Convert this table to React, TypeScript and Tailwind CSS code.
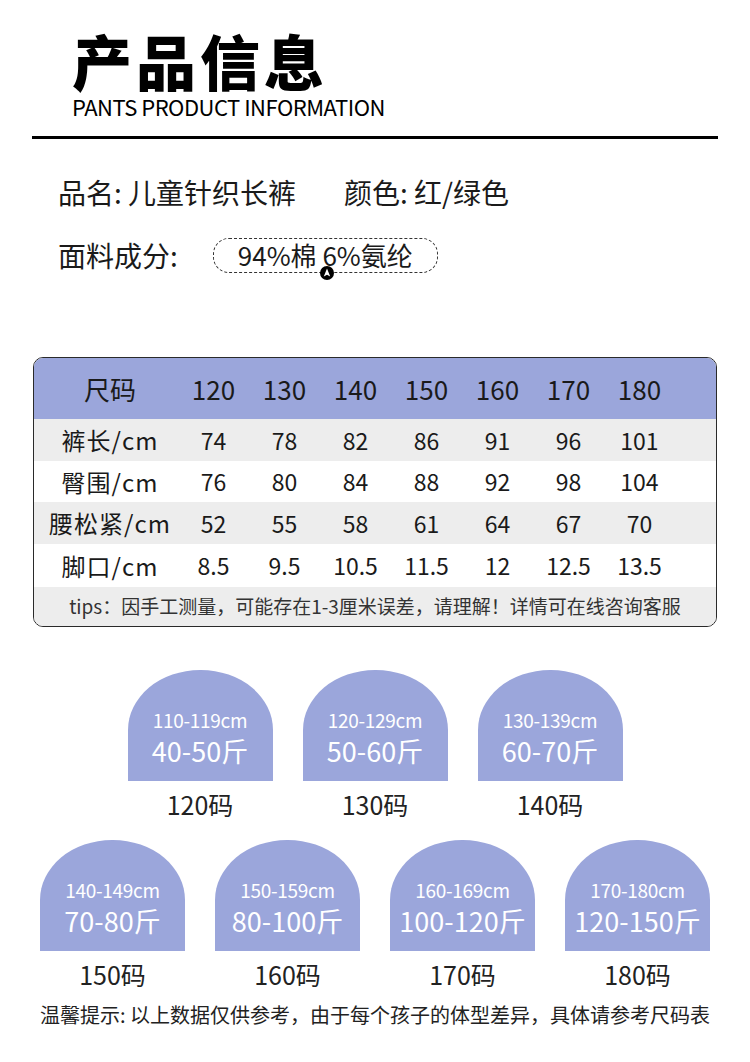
import React from "react";

const sizes = ["120", "130", "140", "150", "160", "170", "180"];

const rows = [
  { label: "裤长/cm", values: ["74", "78", "82", "86", "91", "96", "101"], bg: "bg-[#ededed]", h: "h-[42px]" },
  { label: "臀围/cm", values: ["76", "80", "84", "88", "92", "98", "104"], bg: "bg-white", h: "h-[41px]" },
  { label: "腰松紧/cm", values: ["52", "55", "58", "61", "64", "67", "70"], bg: "bg-[#ededed]", h: "h-[42px]" },
  { label: "脚口/cm", values: ["8.5", "9.5", "10.5", "11.5", "12", "12.5", "13.5"], bg: "bg-white", h: "h-[43px]" },
];

const topCards = [
  { height: "110-119cm", weight: "40-50斤", size: "120码" },
  { height: "120-129cm", weight: "50-60斤", size: "130码" },
  { height: "130-139cm", weight: "60-70斤", size: "140码" },
];

const bottomCards = [
  { height: "140-149cm", weight: "70-80斤", size: "150码" },
  { height: "150-159cm", weight: "80-100斤", size: "160码" },
  { height: "160-169cm", weight: "100-120斤", size: "170码" },
  { height: "170-180cm", weight: "120-150斤", size: "180码" },
];

function ArchCard({ height, weight, size }: { height: string; weight: string; size: string }) {
  return (
    <div className="flex w-[145px] flex-col items-center">
      <div className="flex h-[111px] w-[145px] flex-col items-center rounded-t-[72px_60px] bg-[#9ba6db] pt-[38px] text-white">
        <div className="text-[19px] font-normal leading-[24px] tracking-[-0.3px]">{height}</div>
        <div className="mt-[3px] text-[27px] leading-[32px]">{weight}</div>
      </div>
      <div className="mt-[7px] text-[25px] leading-[32px] text-[#222]">{size}</div>
    </div>
  );
}

function LocateBadge() {
  return (
    <svg width="14" height="14" viewBox="0 0 14 14" className="absolute left-[106px] top-[27px]">
      <circle cx="7" cy="7" r="7" fill="#000" />
      <path d="M7 2.6 L10.2 10.6 L7 8.8 L3.8 10.6 Z" fill="#fff" />
    </svg>
  );
}

export default function App() {
  return (
    <div className="h-[1062px] w-[750px] overflow-hidden bg-white font-['Noto_Sans_CJK_SC','Noto_Sans',sans-serif] text-[#1a1a1a]">
      {/* Title */}
      <div className="pl-[72px] pt-[30px]">
        <h1 className="text-[60px] font-black leading-[60px] tracking-[4px] text-black">产品信息</h1>
        <p className="mt-[3px] text-[22px] leading-[26px] tracking-[-0.5px] text-black">PANTS PRODUCT INFORMATION</p>
      </div>
      <div className="mx-[32px] mt-[17px] h-[3px] bg-black" />

      {/* Basic info */}
      <div className="mt-[33px] flex pl-[58px] text-[28px] leading-[40px]">
        <span>品名: 儿童针织长裤</span>
        <span className="ml-[48px]">颜色: 红/绿色</span>
      </div>
      <div className="mt-[23px] flex items-center pl-[58px] text-[28px] leading-[40px]">
        <span>面料成分:</span>
        <div className="relative ml-[35px] flex h-[35px] w-[225px] items-center justify-center rounded-[16px] border border-dashed border-[#333]">
          <span className="text-[26px] leading-[30px]">94%棉 6%氨纶</span>
          <LocateBadge />
        </div>
      </div>

      {/* Size table */}
      <div className="mx-[33px] mt-[82px] overflow-hidden rounded-[10px] border-[1.5px] border-[#2a2a2a]">
        <div className="grid h-[61px] grid-cols-[144px_repeat(7,71px)_1fr] items-center bg-[#9ba6db] text-[26px]">
          <div className="pl-[8px] text-center">尺码</div>
          {sizes.map((s) => (
            <div key={s} className="text-center">{s}</div>
          ))}
          <div />
        </div>
        {rows.map((r) => (
          <div key={r.label} className={`grid grid-cols-[144px_repeat(7,71px)_1fr] items-center text-[23px] ${r.bg} ${r.h}`}>
            <div className="pl-[8px] text-center text-[24px] tracking-[1px]">{r.label}</div>
            {r.values.map((v, i) => (
              <div key={i} className="text-center">{v}</div>
            ))}
            <div />
          </div>
        ))}
        <div className="flex h-[39px] items-center justify-center bg-[#ededed] text-[19px] text-[#333]">
          tips：因手工测量，可能存在1-3厘米误差，请理解！详情可在线咨询客服
        </div>
      </div>

      {/* Size cards */}
      <div className="mt-[43px] flex justify-center gap-[30px]">
        {topCards.map((c) => (
          <ArchCard key={c.size} {...c} />
        ))}
      </div>
      <div className="mt-[20px] flex justify-center gap-[30px]">
        {bottomCards.map((c) => (
          <ArchCard key={c.size} {...c} />
        ))}
      </div>

      {/* Footer note */}
      <div className="mt-[10px] text-center text-[20px] leading-[30px] text-[#222]">
        温馨提示: 以上数据仅供参考，由于每个孩子的体型差异，具体请参考尺码表
      </div>
    </div>
  );
}
